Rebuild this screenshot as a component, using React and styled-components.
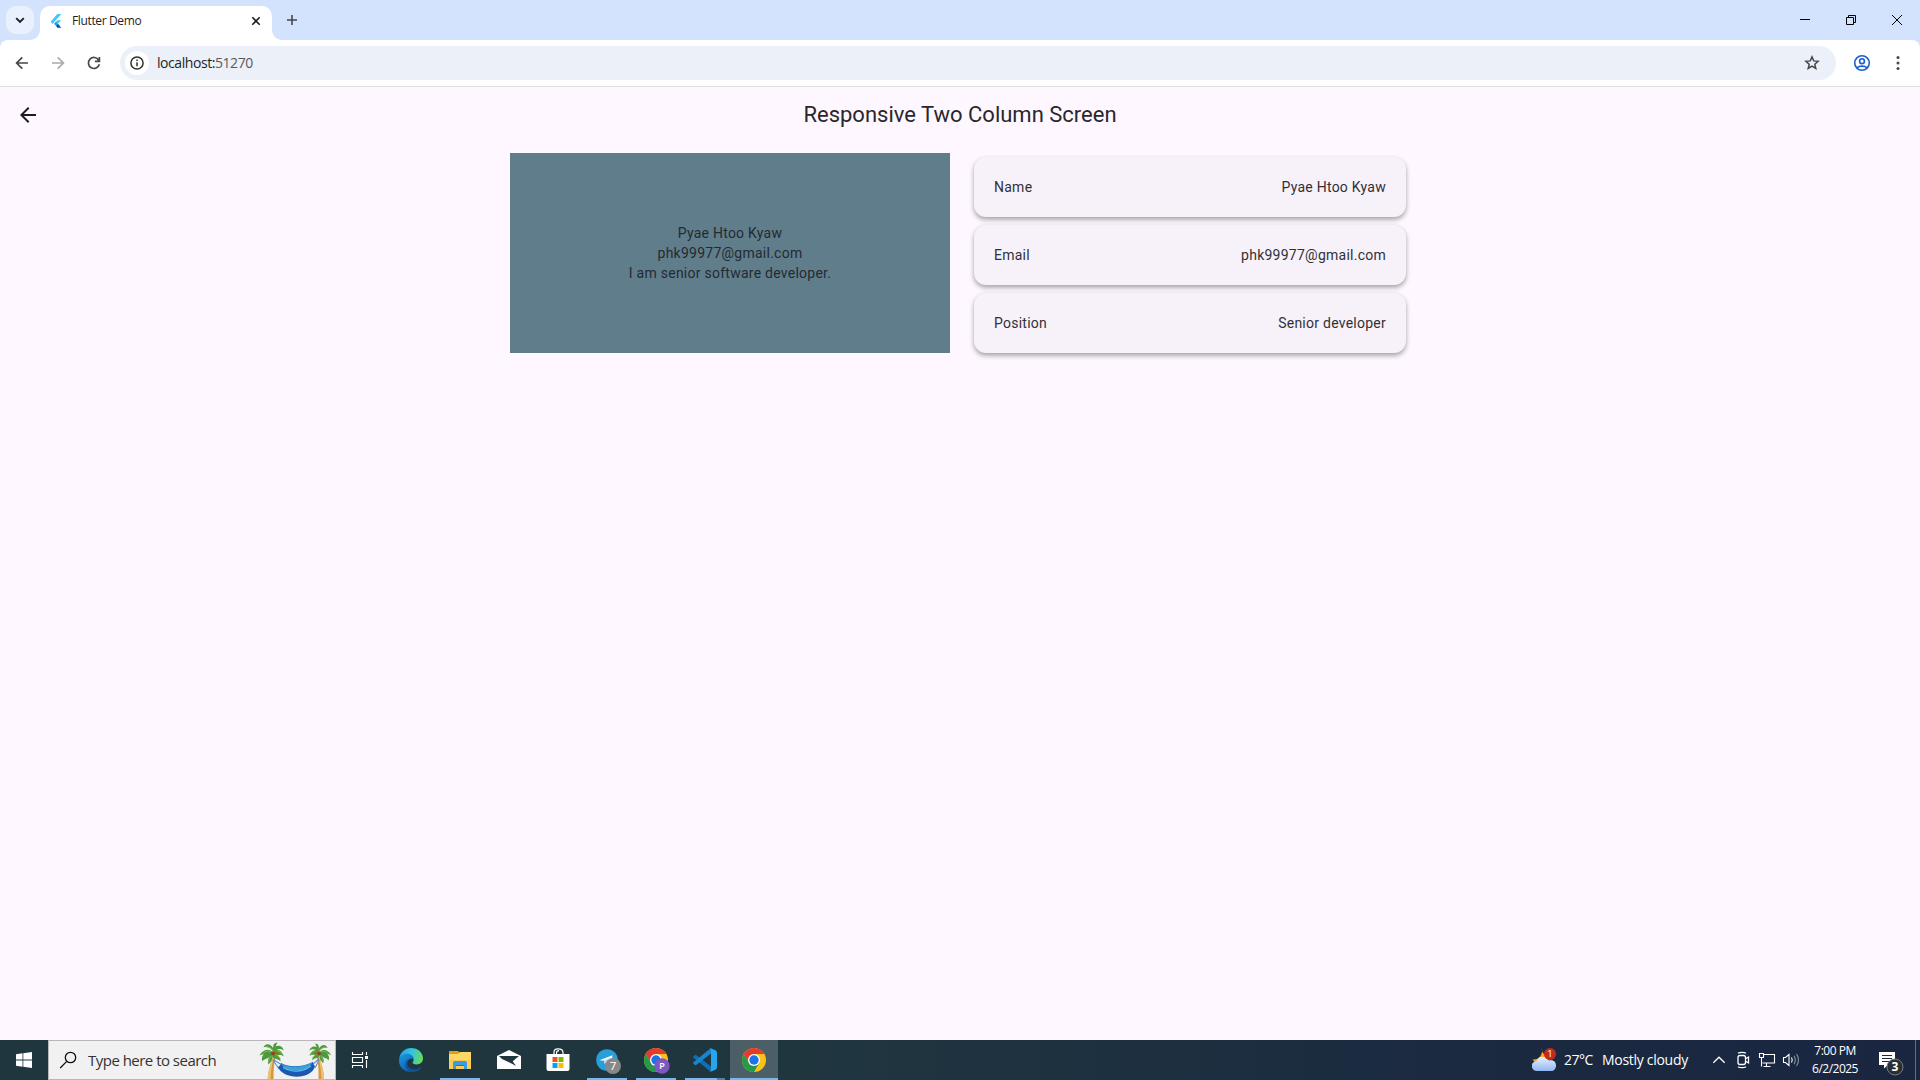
import React from "react";
import styled, { createGlobalStyle } from "styled-components";

const Global = createGlobalStyle`
  * { box-sizing: border-box; }
  html, body { margin: 0; padding: 0; overflow: hidden; }
  svg { display: block; flex: none; }
`;

const uiFont = `"Open Sans", "Noto Sans", sans-serif`;

const Screen = styled.div`
  width: 1920px;
  height: 1080px;
  display: flex;
  flex-direction: column;
  background: #fef7ff;
  font-family: Roboto, sans-serif;
`;

/* ---------- browser ---------- */
const TabStrip = styled.div`
  height: 40px;
  flex: none;
  display: flex;
  align-items: flex-start;
  background: #d3e3fd;
`;
const TabSearch = styled.div`
  width: 28px;
  height: 28px;
  margin: 6px 6px 0;
  border-radius: 10px;
  background: #e9f1fe;
`;
const Tab = styled.div`
  position: relative;
  width: 232px;
  height: 34px;
  margin-top: 6px;
  padding: 0 9px 0 10px;
  display: flex;
  align-items: center;
  background: #fff;
  border-radius: 10px 10px 0 0;
  &::before, &::after {
    content: "";
    position: absolute;
    bottom: 0;
    width: 10px;
    height: 10px;
  }
  &::before {
    left: -10px;
    background: radial-gradient(circle at 0 0, transparent 9.5px, #fff 10.2px);
  }
  &::after {
    right: -10px;
    background: radial-gradient(circle at 100% 0, transparent 9.5px, #fff 10.2px);
  }
`;
const TabTitle = styled.span`
  flex: 1;
  margin-left: 6px;
  padding-bottom: 4px;
  font: 12px/16px ${uiFont};
  letter-spacing: -0.36px;
  color: #1f1f1f;
  white-space: nowrap;
`;
const TabClose = styled.span`padding-bottom: 5px;`;
const NewTab = styled.div`margin: 12px 0 0 12px;`;
const WindowControls = styled.div`
  margin-left: auto;
  height: 40px;
  display: flex;
`;
const Control = styled.div`
  width: 46px;
  height: 40px;
`;
const ToolbarBack = styled.div`
  flex: none;
  background: #d3e3fd;
`;
const Toolbar = styled.div`
  height: 47px;
  display: flex;
  align-items: center;
  background: #fff;
  border-bottom: 1px solid #dfdfdf;
  border-radius: 8px 8px 0 0;
`;
const NavButtons = styled.div`
  width: 120px;
  padding-left: 4px;
  display: flex;
`;
const Omnibox = styled.div`
  width: 1716px;
  height: 34px;
  padding: 0 16px 0 5px;
  display: flex;
  align-items: center;
  border-radius: 17px;
  background: #ecf0f9;
`;
const SiteInfo = styled.div`
  width: 24px;
  height: 24px;
  border-radius: 50%;
  background: #fff;
`;
const Url = styled.span`
  flex: 1;
  margin-left: 8px;
  font: 14px/20px ${uiFont};
  letter-spacing: -0.44px;
  color: #1f1f1f;
  span { color: #5a5a5a; }
`;
const ToolbarEnd = styled.div`display: flex; margin-left: 14px; gap: 12px;`;

/* ---------- page ---------- */
const Page = styled.main`
  flex: 1;
  display: flex;
  flex-direction: column;
  align-items: center;
  color: #1d1b20;
`;
const AppBar = styled.header`
  width: 100%;
  height: 56px;
  display: grid;
  grid-template-columns: 56px 1fr 56px;
  align-items: center;
  justify-items: center;
`;
const Title = styled.h1`
  margin: 0;
  font-weight: 400;
  font-size: 22px;
  line-height: 28px;
  color: #29272c;
  white-space: nowrap;
`;
const Columns = styled.section`
  width: 900px;
  margin-top: 10px;
  display: grid;
  grid-template-columns: 440px 440px;
  gap: 20px;
`;
const Summary = styled.div`
  height: 200px;
  display: flex;
  flex-direction: column;
  align-items: center;
  justify-content: center;
  background: #607d8b;
  color: #242a31;
`;
const BodyText = styled.span`
  font-size: 14px;
  line-height: 20px;
  letter-spacing: 0.25px;
  white-space: nowrap;
`;
const Cards = styled.div`
  padding: 4px;
  display: flex;
  flex-direction: column;
  gap: 8px;
`;
const Card = styled.div`
  height: 60px;
  padding: 0 20px;
  display: flex;
  align-items: center;
  justify-content: space-between;
  border-radius: 12px;
  background: #f7f2fa;
  color: #323035;
  box-shadow: 0 3px 5px rgba(0, 0, 0, 0.28), 0 1px 4px rgba(0, 0, 0, 0.1);
`;

/* ---------- taskbar ---------- */
const Taskbar = styled.footer`
  height: 40px;
  flex: none;
  display: flex;
  background: linear-gradient(90deg, #20363f 0%, #20363f 42%, #1b2a40 75%, #1a2640 100%);
  color: #fff;
  font-family: ${uiFont};
`;
const Start = styled.div`
  width: 48px;
  padding: 12px 0 0 16px;
`;
const SearchBox = styled.div`
  width: 288px;
  height: 40px;
  padding-right: 2px;
  display: flex;
  align-items: center;
  background: #f1f1f1;
  border: 1px solid #b9b5bb;
`;
const SearchLabel = styled.span`
  flex: 1;
  margin-left: 10px;
  font-size: 15px;
  line-height: 20px;
  letter-spacing: -0.52px;
  color: #333;
  white-space: nowrap;
`;
const Apps = styled.div`
  display: flex;
  gap: 1px;
  margin-left: 3px;
`;
const App48 = styled.div`
  width: 48px;
  height: 40px;
  display: flex;
  flex-direction: column;
  align-items: center;
  justify-content: space-between;
  background: ${(p) => (p.$active ? "#4c5e66" : "transparent")};
`;
const Running = styled.div`
  width: ${(p) => (p.$wide ? 48 : 40)}px;
  height: 2px;
  background: ${(p) => (p.$stacked ? "linear-gradient(90deg, #76b9ed 32px, #50829f 32px)" : "#76b9ed")};
`;
const Tray = styled.div`
  margin-left: auto;
  display: flex;
  align-items: center;
`;
const Weather = styled.div`
  display: flex;
  align-items: center;
  width: 180px;
  font-size: 14px;
  line-height: 20px;
  white-space: nowrap;
`;
const Temp = styled.span`width: 38px; margin-left: 8px; letter-spacing: -0.5px;`;
const Sky = styled.span`letter-spacing: -0.29px;`;
const Clock = styled.div`
  width: 72px;
  margin-left: -5px;
  text-align: center;
  font-size: 12px;
  line-height: 18px;
  letter-spacing: -0.5px;
`;
const ShowDesktop = styled.div`
  width: 5px;
  height: 40px;
  border-left: 1px solid #66707f;
`;

const Line = ({ w, h, color = "#1f1f1f", sw = 1.7, children }) => (
  <svg width={w} height={h} viewBox={`0 0 ${w} ${h}`} fill="none" stroke={color} strokeWidth={sw}>
    {children}
  </svg>
);

const FlutterLogo = () => (
  <svg width="16" height="28" viewBox="0 0 16 28">
    <g transform="translate(-0.2 1.200) scale(0.8 0.84)">
      <path d="M9.4 4.500h5L3.400 16.300 1 13.800z" fill="#47c5fb" />
      <path d="M9.300 12.100h5l-6.600 6.200-2.200-2.200z" fill="#47c5fb" />
      <path d="M5.300 16.200l2.400-2.300 2.500 2.300-2.500 2.400z" fill="#00b5f8" />
      <path d="M7.700 18.600l2.500-2.400 4.100 4.800H9.400z" fill="#00569e" />
    </g>
  </svg>
);

const Palm = ({ x, y, s = 1, flip }) => (
  <g transform={`translate(${x} ${y}) scale(${flip ? -s : s} ${s})`}>
    <path d="M1 1C-1 11-5 18-5 30h6C1 18 1 10 4 3z" fill="#d8963a" />
    <path d="M1 3c-1 8-3 15-3 27h-3C-5 17-1 10 1 3z" fill="#edc174" />
    <path d="M1 0C-5-6-11-1-13 3c4-2 4-1 4-1-2 2-2 5-1 7 1-3 5-2 7-5-2 3-2 6-1 8 2-2 4-4 4-8 2 3 6 2 8 5 0-3-1-5-3-6 3-1 5 0 6 1C9-3 5-3 4-2c1-2 5-2 7 0 0-4-5-6-8-4l2-4C1-10 0-6 1-4-2-9-7-10-9-5c3-1 6 0 8 2z" fill="#4d9a3c" />
    <path d="M1 0C-3-2-8-2-10 2M2 0c3-3 6-1 9 3M1-1C0-4-4-6-7-6M1 2c-3 2-5 4-5 8M2 1c2 1 4 4 6 5" stroke="#86bb4f" strokeWidth="1" fill="none" />
    <circle cx="0.5" cy="1" r="2" fill="#8b461d" />
    <circle cx="3.6" cy="0.3" r="1.6" fill="#b05c25" />
  </g>
);

const Hammock = () => (
  <svg width="74" height="38" viewBox="0 0 74 38">
    <Palm x={13.500} y={11.500} />
    <Palm x={60.500} y={11.500} s={0.9} flip />
    <path d="M15 19l8 5M14 19l6 9M60 18l-6 5M60 19l-4 8" stroke="#5d8ed0" strokeWidth="1.1" />
    <path d="M19 26c2-1 3-3 3-4 9 5 22 4 32-1 0 2 1 3 2 4-3 14-32 14-37 1z" fill="#1b58b2" />
    <path d="M22 22.500c9 5 22 4 31-1-2 9-25 12-31 1z" fill="#3aa1dd" />
    <path d="M24 26.500c9 5 19 5 28-1.500" stroke="#58bfe8" strokeWidth="1.2" fill="none" />
  </svg>
);

const Edge = () => (
  <svg width="24" height="24" viewBox="0 0 24 24">
    <defs>
      <linearGradient id="eTop" x1="0" y1="0.3" x2="1" y2="0.5">
        <stop offset="0" stopColor="#249fe0" />
        <stop offset="0.5" stopColor="#35c3e4" />
        <stop offset="1" stopColor="#66dc55" />
      </linearGradient>
      <linearGradient id="eLeft" x1="0" y1="0" x2="0.6" y2="1">
        <stop offset="0" stopColor="#1b9de2" />
        <stop offset="1" stopColor="#0f5cad" />
      </linearGradient>
    </defs>
    <path d="M.2 10.8C1 4.5 6 0 12 0c7 0 12 4.9 12 10.3 0 4-3 6.2-6.3 6.2-3.2 0-4.2-1.1-4.2-1.9 0-.7 1.1-1 1.1-2.9C14.6 8.800 11.600 6.800 8 6.800c-3.700 0-6.300 1.600-7.800 4z" fill="url(#eTop)" />
    <path d="M.1 11.500C1.200 7.700 4.600 5.700 8.300 5.700c3.700 0 6.300 2.300 6.300 5.500-1-1.300-5-1.200-6.200 2.500-1.200 4 1 8.200 5.600 10.100C6 24.800-.6 19.500.1 11.500z" fill="url(#eLeft)" />
    <path d="M9.600 11.600c-3 4.300.4 10 5.800 9.700 3-.1 4.900-1.300 6.600-2.400.3-.2.700.1.400.5-2 2.900-5.100 4.600-8.600 4.600-5.300-.6-8.300-5.200-7-9.200.4-1.400 1.500-2.600 2.800-3.200z" fill="#124f9b" />
  </svg>
);

const Explorer = () => (
  <svg width="24" height="24" viewBox="0 0 24 24">
    <path d="M1 3h9l2 2v3H1z" fill="#e2a10e" />
    <path d="M1 6h9l2-2h11v17H1z" fill="#ffd767" />
    <path d="M1 12h22v9H1z" fill="#fccb55" />
    <path d="M5 21v-7l1-1h12l1 1v7h-3v-4H8v4z" fill="#3f9be0" />
    <path d="M8 17h8v1H8z" fill="#2077bd" />
  </svg>
);

const Mail = () => (
  <svg width="24" height="24" viewBox="0 0 24 24">
    <path d="M0 8L12 2l12 6v13H0z" fill="#fff" />
    <path d="M2 8h20l-7 4.700 4 5L5 11z" fill="#20363f" />
    <path d="M12.600 13.300L22 8l-6.500 5.500 3 4.200z" fill="#20363f" />
  </svg>
);

const Store = () => (
  <svg width="24" height="24" viewBox="0 0 24 24">
    <path d="M8 8V4.500C8 2 9 .8 12 .8s5 1.200 5 3.700V8M10.500 7V5c0-1.500.8-2.300 2.500-2.300" fill="none" stroke="#fff" strokeWidth="1.200" />
    <path d="M.5 6h23v15a2 2 0 0 1-2 2h-19a2 2 0 0 1-2-2z" fill="#fff" />
    <path d="M6.500 9h5v5h-5z" fill="#f25022" />
    <path d="M12.500 9h5v5h-5z" fill="#7fba00" />
    <path d="M6.500 15h5v5h-5z" fill="#00a4ef" />
    <path d="M12.500 15h5v5h-5z" fill="#ffb900" />
  </svg>
);

const BadgeText = ({ x, y, size = 9, weight = 400, children }) => (
  <text x={x} y={y} textAnchor="middle" fontFamily="Open Sans, sans-serif" fontSize={size} fontWeight={weight} fill="#fff">{children}</text>
);

const Telegram = () => (
  <svg width="24" height="24" viewBox="0 0 24 24" overflow="visible">
    <circle cx="12" cy="12" r="10.800" fill="#279fda" />
    <path d="M4.500 12.300L17.500 7.300l-1.500 9-4.300-2.600-2 2.300-.4-3.300z" fill="#fff" />
    <path d="M9.300 12.700L15 9l-4 4.300-1.300 2.600z" fill="#b5d5e8" />
    <circle cx="18" cy="18" r="8" fill="#888" />
    <BadgeText x={18} y={22} size={11.500}>7</BadgeText>
  </svg>
);

const Chrome = ({ badge }) => (
  <svg width="24" height="24" viewBox="0 0 24 24" overflow="visible">
    <circle cx="12" cy="12" r="12" fill="#fbc116" />
    <path d="M1.610 6A12 12 0 0 1 22.390 6H12L6.800 15z" fill="#e33b2e" />
    <path d="M1.610 6A12 12 0 0 0 12 24l5.200-9L12 17.500 6.800 15z" fill="#229a4c" />
    <circle cx="12" cy="12" r="6" fill="#fff" />
    <circle cx="12" cy="12" r="4.700" fill="#1a73e8" />
    {badge && <circle cx="18" cy="18" r="7.700" fill="#7e57c2" />}
    {badge && <BadgeText x={18} y={21.200} weight={600}>{badge}</BadgeText>}
  </svg>
);

const VsCode = () => (
  <svg width="24" height="24" viewBox="0 0 24 24">
    <path d="M.3 8.600L2 7.100c.4-.3.800-.3 1.200 0L18 18.500V24L.4 9.800c-.4-.400-.4-.8-.1-1.200z" fill="#0f6fb5" />
    <path d="M.3 15.400L2 16.900c.4.300.8.300 1.200 0L18 5.500V0L.4 14.200c-.4.400-.4.800-.1 1.200z" fill="#1686cd" />
    <path d="M17 24c-.5-.1-.7-.3-1-.5 1 .6 2 0 2-1V1.500c0-1-1-1.600-2-1 .3-.3.600-.5 1.300-.5l5 2.300c.9.400 1.700 1.200 1.700 2.200v15c0 1-.6 1.800-1.500 2.200z" fill="#27a5ee" />
  </svg>
);

const WeatherIcon = () => (
  <svg width="24" height="24" viewBox="0 0 24 24">
    <defs>
      <linearGradient id="cloud" x1="0" y1="0" x2="0" y2="1">
        <stop offset="0" stopColor="#e7f1ff" />
        <stop offset="1" stopColor="#91b7f2" />
      </linearGradient>
    </defs>
    <path d="M10 0c-.5 2 0 4 2 6l4 5-8 4c-4 0-6-1-7.500-3.500C7 12 11 7 10 0z" fill="#f5a623" />
    <path d="M5 23a5 5 0 0 1-.5-10C6 8 14 7 17 12.500c5-1 7 2 7 5 0 3.500-2 5.500-5 5.500z" fill="url(#cloud)" />
    <circle cx="18" cy="6" r="6" fill="#c42b1c" />
    <BadgeText x={18} y={9.200} size={9.500}>1</BadgeText>
  </svg>
);

const details = [
  ["Name", "Pyae Htoo Kyaw"],
  ["Email", "phk99977@gmail.com"],
  ["Position", "Senior developer"],
];

const apps = [
  { icon: <Edge /> },
  { icon: <Explorer />, running: true },
  { icon: <Mail /> },
  { icon: <Store /> },
  { icon: <Telegram />, running: true },
  { icon: <Chrome badge="P" />, running: true },
  { icon: <VsCode />, running: true, stacked: true },
  { icon: <Chrome />, running: true, active: true },
];

const AppIcon = styled.div`padding-top: 8px;`;

export default function App() {
  return (
    <Screen>
      <Global />
      <TabStrip>
        <TabSearch>
          <Line w={28} h={28} sw={1.900}><path d="M10.200 12.200l3.800 3.800 3.800-3.800" /></Line>
        </TabSearch>
        <Tab>
          <FlutterLogo />
          <TabTitle>Flutter Demo</TabTitle>
          <TabClose>
            <Line w={14} h={14} sw={1.600}><path d="M3.300 3.300l7.400 7.400M10.700 3.300l-7.400 7.400" /></Line>
          </TabClose>
        </Tab>
        <NewTab>
          <Line w={16} h={16} color="#474747" sw={1.600}><path d="M8 3v10M3 8h10" /></Line>
        </NewTab>
        <WindowControls>
          <Control><Line w={46} h={40} color="#000" sw={1}><path d="M18 19.500h10" /></Line></Control>
          <Control>
            <Line w={46} h={40} color="#000" sw={1}>
              <path d="M18.500 17.500h7v7h-7zM20.500 17.500v-2h7v7h-2" />
            </Line>
          </Control>
          <Control><Line w={46} h={40} color="#000" sw={1}><path d="M18 15l10 10M28 15L18 25" /></Line></Control>
        </WindowControls>
      </TabStrip>
      <ToolbarBack>
        <Toolbar>
          <NavButtons>
            <Line w={36} h={36} color="#474747"><path d="M24 18H13M18.300 12.300L12.600 18l5.700 5.700" /></Line>
            <Line w={36} h={36} color="#aaa"><path d="M12 18h11M17.700 12.300l5.700 5.700-5.700 5.700" /></Line>
            <Line w={36} h={36} color="#474747">
              <path d="M22.700 15.200A5.500 5.500 0 1 0 23.300 19.200M23.400 12v4.300h-4.500" />
            </Line>
          </NavButtons>
          <Omnibox>
            <SiteInfo>
              <Line w={24} h={24} color="#303030" sw={1.500}>
                <circle cx="12" cy="12" r="6.100" />
                <path d="M12 11.300v4M12 8.500v1.600" />
              </Line>
            </SiteInfo>
            <Url>localhost:<span>51270</span></Url>
            <Line w={16} h={16} color="#474747" sw={1.500}>
              <path d="M8 1.900l1.700 4 4.400.4-3.300 2.900 1 4.300L8 11.200l-3.800 2.300 1-4.300-3.300-2.900 4.400-.4z" />
            </Line>
          </Omnibox>
          <ToolbarEnd>
            <Line w={24} h={24} color="#1a5fd0" sw={1.600}>
              <circle cx="12" cy="12" r="7.300" />
              <circle cx="12" cy="10.200" r="2.400" />
              <path d="M6.800 16.800c2.700-2.200 7.700-2.200 10.400 0" />
            </Line>
            <svg width="24" height="24" viewBox="0 0 24 24" fill="#474747">
              <circle cx="12" cy="6.500" r="1.500" /><circle cx="12" cy="12" r="1.500" /><circle cx="12" cy="17.500" r="1.500" />
            </svg>
          </ToolbarEnd>
        </Toolbar>
      </ToolbarBack>

      <Page>
        <AppBar>
          <svg width="24" height="24" viewBox="0 0 24 24" fill="#1d1b20">
            <path d="M20 11H7.830l5.590-5.590L12 4l-8 8 8 8 1.410-1.410L7.830 13H20v-2z" />
          </svg>
          <Title>Responsive Two Column Screen</Title>
        </AppBar>
        <Columns>
          <Summary>
            <BodyText>Pyae Htoo Kyaw</BodyText>
            <BodyText>phk99977@gmail.com</BodyText>
            <BodyText>I am senior software developer.</BodyText>
          </Summary>
          <Cards>
            {details.map(([label, value]) => (
              <Card key={label}>
                <BodyText>{label}</BodyText>
                <BodyText>{value}</BodyText>
              </Card>
            ))}
          </Cards>
        </Columns>
      </Page>

      <Taskbar>
        <Start>
          <svg width="16" height="16" viewBox="0 0 16 16" fill="#fff">
            <path d="M0 2.200l6.500-.9v6.300H0zM7.300 1.200L16 0v7.600H7.300zM0 8.400h6.500v6.300L0 13.800zM7.300 8.400H16V16l-8.700-1.200z" />
          </svg>
        </Start>
        <SearchBox>
          <Line w={29} h={38} color="#111" sw={1.300}>
            <circle cx="21.500" cy="16.500" r="5.200" />
            <path d="M17.700 20.400L11.200 27" />
          </Line>
          <SearchLabel>Type here to search</SearchLabel>
          <Hammock />
        </SearchBox>
        <App48>
          <Line w={48} h={40} color="#fff" sw={1.100}>
            <path d="M16.500 12v2.500h10V12M16.500 28v-2.500h10V28M16.500 17.500h10v5h-10zM30.500 12v3M30.500 20v8" />
            <path d="M29 16h3v3h-3z" fill="#fff" stroke="none" />
          </Line>
        </App48>
        <Apps>
          {apps.map((a, i) => (
            <App48 key={i} $active={a.active}>
              <AppIcon>{a.icon}</AppIcon>
              {a.running && <Running $wide={a.active} $stacked={a.stacked} />}
            </App48>
          ))}
        </Apps>
        <Tray>
          <Weather>
            <WeatherIcon />
            <Temp>27°C</Temp>
            <Sky>Mostly cloudy</Sky>
          </Weather>
          <Line w={14} h={40} color="#fff" sw={1.300}><path d="M1.300 22.800L7 17.200l5.700 5.600" /></Line>
          <Line w={30} h={40} color="#fff" sw={1.300}>
            <rect x="12" y="15.500" width="7.500" height="9" rx="2" />
            <path d="M19.500 18.700l3-1.700v6l-3-1.700M12 13.300c2-1.300 6-1.300 8 0M12 26.700c2 1.300 6 1.300 8 0" />
          </Line>
          <Line w={24} h={40} color="#fff" sw={1.100}>
            <path d="M7.500 14.500h11v8.500H6.500M3.500 13.500h4v4h-4zM5.500 17.500v9M10.500 23v3.500M7.500 26.500h7" />
          </Line>
          <Line w={24} h={40} color="#fff" sw={1.100}>
            <path d="M3.500 17.500h2l3.500-3v11l-3.500-3h-2z" />
            <path d="M11.500 17.500q1.500 2.500 0 5" />
            <path d="M14 15.700q2.700 4.300 0 8.600M16.500 14q4 6 0 12" stroke="#8791a0" />
          </Line>
          <Clock>7:00 PM<br />6/2/2025</Clock>
          <svg width="44" height="40" viewBox="0 0 44 40">
            <path d="M8 12h16v13h-7l-4 3.500V25H8z" fill="#fff" />
            <path d="M11 15.500h10M11 18.500h10M11 21.500h7" stroke="#1a2640" />
            <circle cx="24" cy="27" r="8" fill="#2b2e35" stroke="#777b82" />
            <BadgeText x={24} y={31.300} size={12} weight={700}>3</BadgeText>
          </svg>
          <ShowDesktop />
        </Tray>
      </Taskbar>
    </Screen>
  );
}
